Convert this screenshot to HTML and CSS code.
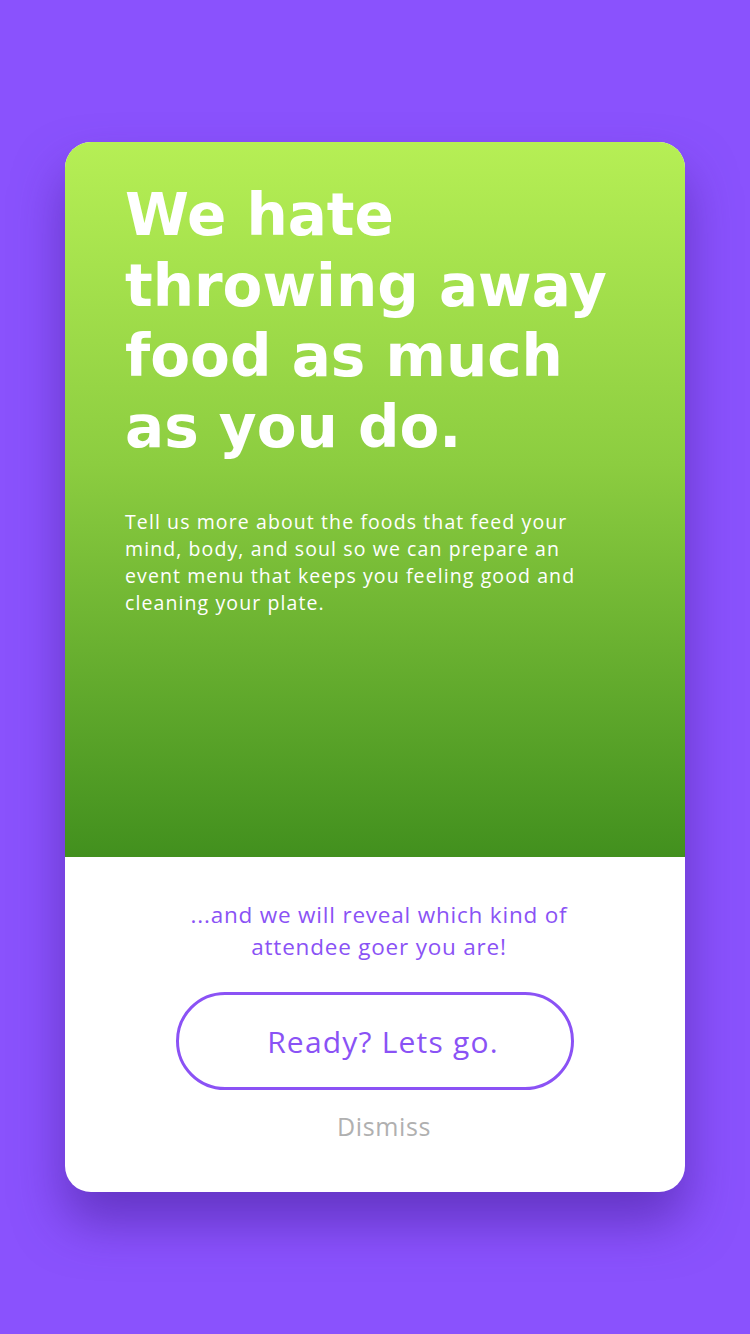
FILE: index.html
```html
<!DOCTYPE html>
<html>
<head>
<meta charset="utf-8">
<link rel="stylesheet" href="styles.css">
</head>
<body>
<div class="page">
  <div class="card">
    <div class="hero">
      <h1 class="title">We hate throwing away food as much as you do.</h1>
      <p class="lead">Tell us more about the foods that feed your mind, body, and soul so we can prepare an event menu that keeps you feeling good and cleaning your plate.</p>
    </div>
    <div class="bottom">
      <p class="reveal">...and we will reveal which kind of attendee goer you are!</p>
      <button class="cta">Ready? Lets go.</button>
      <div class="dismiss">Dismiss</div>
    </div>
  </div>
</div>
</body>
</html>
```
FILE: styles.css
```css
html, body {
  margin: 0;
  padding: 0;
}
body {
  background: #8a52fd;
  font-family: "Open Sans", "DejaVu Sans", sans-serif;
}
.page {
  width: 750px;
  height: 1334px;
  display: flex;
  justify-content: center;
  padding-top: 142px;
  box-sizing: border-box;
}
.card {
  width: 620px;
  height: 1050px;
  border-radius: 26px;
  overflow: hidden;
  background: #fff;
  display: flex;
  flex-direction: column;
  box-shadow: 0 30px 50px rgba(70, 30, 150, 0.55);
}
.hero {
  height: 715px;
  background: linear-gradient(180deg, #b6ef55 0%, #8ccd40 45%, #42901e 100%);
  padding: 38px 60px 0 60px;
  box-sizing: border-box;
  color: #fff;
}
.title {
  margin: 0;
  font-family: "DejaVu Sans", sans-serif;
  font-weight: 700;
  font-size: 58px;
  line-height: 70.5px;
  letter-spacing: 0;
  width: 490px;
}
.lead {
  margin: 46px 0 0 0;
  font-size: 19.5px;
  line-height: 27px;
  font-weight: 400;
  letter-spacing: 1.1px;
  width: 470px;
}
.bottom {
  flex: 1;
  display: flex;
  flex-direction: column;
  align-items: center;
  padding-top: 42px;
}
.reveal {
  margin: 0;
  width: 420px;
  padding-left: 8px;
  text-align: center;
  color: #8a52f5;
  font-size: 22.5px;
  line-height: 32px;
  letter-spacing: 0.8px;
}
.cta {
  margin-top: 29px;
  width: 398px;
  height: 98px;
  border: 3px solid #8b52f5;
  border-radius: 49px;
  background: #fff;
  color: #8a52f5;
  font-family: "Open Sans", "DejaVu Sans", sans-serif;
  font-size: 30px;
  letter-spacing: 1.2px;
  padding: 0 0 0 16px;
}
.dismiss {
  margin-top: 20px;
  padding-left: 18px;
  color: #b0b0b0;
  font-size: 25px;
  letter-spacing: 0.6px;
  line-height: 32px;
}
```
